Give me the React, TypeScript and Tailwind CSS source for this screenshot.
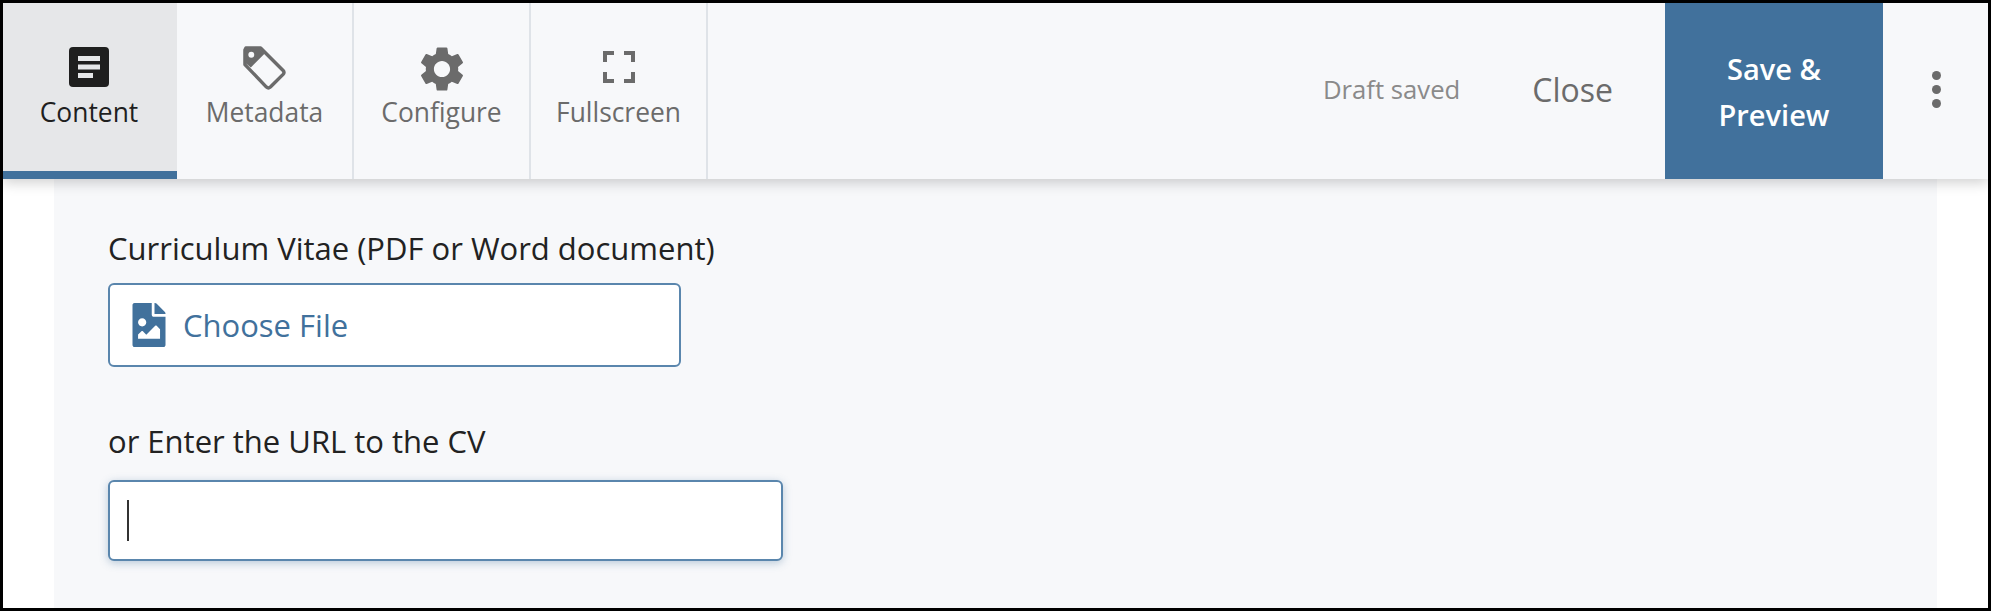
import { MdSettings } from "react-icons/md";
import { FaFileImage } from "react-icons/fa";

const tabs = [
  { label: "Metadata", iconBox: "h-[89px] pb-[2px] mb-[3px]", icon: <TagIcon /> },
  { label: "Configure", iconBox: "h-[92px]", icon: <MdSettings className="-mb-[1px] h-[54px] w-[54px]" /> },
  { label: "Fullscreen", iconBox: "h-[82px] pb-[2px] mb-[10px]", icon: <CornersIcon /> },
];

function ContentIcon() {
  return (
    <svg viewBox="0 0 40 40" className="h-10 w-10" fill="#1f1f1f">
      <path d="M4 0h32a4 4 0 0 1 4 4v32a4 4 0 0 1-4 4H4a4 4 0 0 1-4-4V4a4 4 0 0 1 4-4z" />
      <path d="M9 9h22v5H9zM9 17.500h22v5H9zM9 26h15v5H9z" fill="#e6e7e9" />
    </svg>
  );
}

function TagIcon() {
  return (
    <svg viewBox="0 0 46 46" className="h-[45px] w-[45px]" fill="none">
      <path d="M4 3h15l23 23a3 3 0 0 1 0 4L29 43a3 3 0 0 1-4 0L3 20V5z" stroke="#6b6b6b" strokeWidth="3.500" strokeLinejoin="round" />
      <path d="M3 4h15l5 5-14 14-6-5z" fill="#6b6b6b" />
      <circle cx="9.500" cy="10" r="3" fill="#f7f8fa" />
    </svg>
  );
}

function CornersIcon() {
  return (
    <svg viewBox="0 0 32 32" className="h-8 w-8" fill="none" stroke="#6b6b6b" strokeWidth="4">
      <path d="M2 11V2h9M21 2h9v9M2 21v9h9M30 21v9h-9" />
    </svg>
  );
}

export default function App() {
  return (
    <div className="flex h-[611px] w-[1991px] flex-col overflow-hidden border-[3px] border-black bg-white font-['Open_Sans',sans-serif]">
      {/* Toolbar */}
      <header className="relative z-10 flex h-[176px] shrink-0 items-stretch bg-[#f7f8fa] shadow-[0_4px_12px_rgba(0,0,0,0.18)]">
        <div className="flex w-[174px] flex-col items-center border-b-[8px] border-[#41719c] bg-[#e6e7e9] pr-[2px] pt-[44px] text-[#1f1f1f]">
          <ContentIcon />
          <span className="mt-[8px] text-[26.400px] leading-[34px]">Content</span>
        </div>
        {tabs.map((tab) => (
          <div
            key={tab.label}
            className="flex w-[177px] flex-col items-center border-r-2 border-[#dfe3e8] text-[#6b6b6b]"
          >
            <div className={`flex items-end ${tab.iconBox}`}>{tab.icon}</div>
            <span className="text-[26.400px] leading-[34px]">{tab.label}</span>
          </div>
        ))}
        <div className="flex flex-1 items-center justify-end">
          <span className="mb-[2px] mr-[72px] text-[25.700px] text-[#8a8a8a]">Draft saved</span>
          <span className="mb-[2px] mr-[52px] text-[32px] text-[#6b6b6b]">Close</span>
          <button className="h-full w-[218px] bg-[#41719c] pt-[2px] text-[29px] leading-[46px] font-semibold text-white">
            Save &amp;
            <br />
            Preview
          </button>
          <div className="flex w-[105px] flex-col items-center gap-[5px] pb-[4px] pl-[2px]">
            <span className="h-[9px] w-[9px] rounded-full bg-[#6b6b6b]" />
            <span className="h-[9px] w-[9px] rounded-full bg-[#6b6b6b]" />
            <span className="h-[9px] w-[9px] rounded-full bg-[#6b6b6b]" />
          </div>
        </div>
      </header>

      {/* Form panel */}
      <main className="mx-[51px] flex-1 bg-[#f7f8fa] px-[54px] pt-[50px] text-[#222222]">
        <label className="block text-[31px] leading-[38px]">Curriculum Vitae (PDF or Word document)</label>
        <button className="mt-[16px] flex h-[84px] w-[573px] items-center gap-[17px] rounded-[6px] border-2 border-[#5a86ad] bg-white pl-[22px] text-[31px] text-[#41719c]">
          <FaFileImage className="h-[44px] w-[34px]" />
          Choose File
        </button>
        <label className="mt-[55px] block text-[31px] leading-[38px]">or Enter the URL to the CV</label>
        <div className="mt-[20px] flex h-[81px] w-[675px] items-center rounded-[6px] border-2 border-[#5a86ad] bg-white pl-[17px] shadow-[0_2px_8px_rgba(65,113,156,0.35)]">
          <span className="h-[41px] w-[2px] bg-[#333333]" />
        </div>
      </main>
    </div>
  );
}
